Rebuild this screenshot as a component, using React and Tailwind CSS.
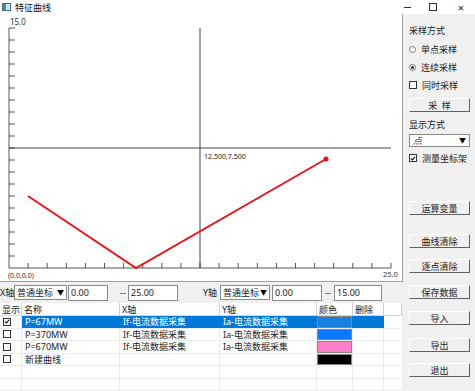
import React from 'react';

const font = { fontFamily: '"Noto Sans", "Noto Sans CJK SC", sans-serif' };

const Chart = () => {
  // axis: x 9..391, y 14..254 (svg coords)
  const xTicks = Array.from({ length: 20 }, (_, i) => 9 + (i + 1) * 19.1);
  const yTicks = Array.from({ length: 20 }, (_, i) => 14 + i * 12);
  return (
    <svg width="402" height="267" className="block">
      <line x1="9" y1="14" x2="9" y2="254" stroke="#555" strokeWidth="1" />
      <line x1="9" y1="254" x2="391" y2="254" stroke="#555" strokeWidth="1" />
      {yTicks.map((y) => (
        <line key={y} x1="9" y1={y} x2="15" y2={y} stroke="#555" strokeWidth="1" />
      ))}
      {xTicks.map((x) => (
        <line key={x} x1={x} y1="249" x2={x} y2="254" stroke="#555" strokeWidth="1" />
      ))}
      <text x="10" y="11" fontSize="8" fill="#333" style={font}>15.0</text>
      <text x="383" y="263" fontSize="7.5" fill="#333" style={font}>25.0</text>
      <text x="8" y="264" fontSize="7" fill="#333" style={font}>(0.0,0.0)</text>
      {/* crosshair */}
      <line x1="9" y1="134" x2="391" y2="134" stroke="#444" strokeWidth="1" />
      <line x1="200" y1="14" x2="200" y2="254" stroke="#444" strokeWidth="1" />
      <text x="204" y="145" fontSize="7" fill="#222" style={font}>12.500,7.500</text>
      {/* curve */}
      <polyline points="28,182 136,254 326,145" fill="none" stroke="#e8161b" strokeWidth="2" />
      <circle cx="326" cy="145" r="2.5" fill="#e8161b" />
    </svg>
  );
};

const Combo = ({ text, w }) => (
  <div className={`shrink-0 flex items-center justify-between h-[15px] border border-[#8a8a8a] bg-white px-[2px] ${w}`}>
    <span className="whitespace-nowrap text-[9px] leading-none text-[#222]">{text}</span>
    <span className="text-[7px] leading-none text-black">▼</span>
  </div>
);

const Field = ({ text, w }) => (
  <div className={`shrink-0 flex items-center h-[16px] border border-[#8a8a8a] bg-white px-[2px] ${w}`}>
    <span className="text-[9px] leading-none text-[#222]">{text}</span>
  </div>
);

const Btn = ({ children, className = '' }) => (
  <div className={`flex items-center justify-center h-[14px] w-[61px] bg-[#f0f0f0] border border-white border-r-[#606060] border-b-[#606060] text-[9px] leading-none text-[#222] ${className}`}>
    {children}
  </div>
);

const cols = 'grid grid-cols-[22px_98px_100px_97px_36px_31px_18px]';

const rows = [
  { show: true, name: 'P=67MW', x: 'If-电流数据采集', y: 'Ia-电流数据采集', color: 'bg-[#1a7fe0]', sel: true },
  { show: false, name: 'P=370MW', x: 'If-电流数据采集', y: 'Ia-电流数据采集', color: 'bg-[#0a78ff]' },
  { show: false, name: 'P=670MW', x: 'If-电流数据采集', y: 'Ia-电流数据采集', color: 'bg-[#ff80c8]' },
  { show: false, name: '新建曲线', x: '', y: '', color: 'bg-black' },
  null,
  null,
];

const Check = ({ on }) => (
  <div className="shrink-0 w-[8px] h-[8px] border border-[#333] bg-white flex items-center justify-center">
    {on && (
      <svg width="7" height="7" viewBox="0 0 7 7">
        <path d="M1 3.5 L2.8 5.2 L6 1.5" fill="none" stroke="#000" strokeWidth="1.2" />
      </svg>
    )}
  </div>
);

const Table = () => (
  <div className="bg-white h-[88px] w-[402px] overflow-hidden text-[9px] leading-none text-[#222]">
    <div className={`${cols} h-[13px] border-b border-[#d8d8d8]`}>
      {['显示', '名称', 'X轴', 'Y轴', '颜色', '删除', ''].map((h, i) => (
        <div key={i} className="whitespace-nowrap overflow-hidden flex items-center px-[2px] border-r border-[#cfcfcf]">{h}</div>
      ))}
    </div>
    {rows.map((r, i) => (
      <div key={i} className={`${cols} h-[12.5px] border-b border-[#ececec]`}>
        <div className="flex items-center pl-[3px] border-r border-[#ececec]">
          {r && <Check on={r.show} />}
        </div>
        {[r?.name, r?.x, r?.y].map((t, j) => (
          <div
            key={j}
            className={`whitespace-nowrap overflow-hidden flex items-center px-[3px] border-r ${r?.sel ? 'bg-[#0078d7] text-white border-[#0078d7]' : 'border-[#ececec]'}`}
          >
            {t || ''}
          </div>
        ))}
        <div className={`border-r ${r?.sel ? 'bg-[#0078d7] border-[#0078d7]' : 'border-[#ececec]'}`}>
          {r && <div className={`h-full w-full border border-[#888] ${r.color}`} />}
        </div>
        <div className={`border-r ${r?.sel ? 'bg-[#0078d7] border-[#0078d7]' : 'border-[#ececec]'}`} />
        <div />
      </div>
    ))}
  </div>
);

const Radio = ({ on, label }) => (
  <div className="flex items-center gap-[5px] h-[12px]">
    <div className="w-[7px] h-[7px] rounded-full border border-[#777] bg-white flex items-center justify-center">
      {on && <div className="w-[3px] h-[3px] rounded-full bg-[#222]" />}
    </div>
    <span className="text-[9px] leading-none text-[#222]">{label}</span>
  </div>
);

const SideCheck = ({ on, label }) => (
  <div className="flex items-center gap-[5px] h-[12px]">
    <Check on={on} />
    <span className="text-[9px] leading-none text-[#222]">{label}</span>
  </div>
);

export default function App() {
  return (
    <div className="w-[475px] h-[391px] bg-[#f0f0f0] overflow-hidden" style={font}>
      {/* title bar */}
      <div className="h-[14px] bg-white flex items-center">
        <div className="ml-[2px] w-[9px] h-[8px] border border-[#4a6a8a] bg-[#cfe3ee] flex items-start">
          <div className="w-[3px] h-full bg-[#3d9e7a]" />
        </div>
        <span className="ml-[4px] text-[9px] leading-none text-[#111]">特征曲线</span>
        <div className="ml-auto flex items-center h-full text-[#222]">
          <div className="w-[24px] flex justify-center">
            <div className="w-[7px] h-[1px] bg-[#333]" />
          </div>
          <div className="w-[28px] flex justify-center">
            <div className="w-[8px] h-[8px] border border-[#333]" />
          </div>
          <div className="w-[28px] flex justify-center text-[11px] leading-none">×</div>
        </div>
      </div>

      <div className="flex">
        {/* left */}
        <div className="w-[403px] shrink-0">
          <div className="h-[268px] bg-white border-r border-b border-[#a0a0a0]">
            <Chart />
          </div>
          <div className="h-[21px] flex items-center whitespace-nowrap text-[9px] leading-none text-[#222]">
            <span className="shrink-0 w-[14px]">X轴</span>
            <Combo text="普通坐标" w="w-[53px]" />
            <Field text="0.00" w="w-[40px] ml-[1px]" />
            <span className="shrink-0 ml-[12px] w-[8px]">--</span>
            <Field text="25.00" w="w-[50px]" />
            <span className="shrink-0 ml-[25px] w-[17px]">Y轴</span>
            <Combo text="普通坐标" w="w-[50px]" />
            <Field text="0.00" w="w-[50px] ml-[2px]" />
            <span className="shrink-0 ml-[3px] w-[9px]">--</span>
            <Field text="15.00" w="w-[48px]" />
          </div>
          <Table />
        </div>

        {/* right panel */}
        <div className="w-[72px] h-[377px] pl-[6px] pt-[12px] flex flex-col">
          <span className="text-[9px] leading-none text-[#222] h-[12px]">采样方式</span>
          <div className="mt-[5px] flex flex-col gap-[6px]">
            <Radio label="单点采样" />
            <Radio on label="连续采样" />
            <SideCheck label="同时采样" />
          </div>
          <Btn className="mt-[7px]">采&nbsp;&nbsp;样</Btn>
          <span className="mt-[8px] text-[9px] leading-none text-[#222] h-[12px]">显示方式</span>
          <div className="mt-[2px] flex items-center justify-between h-[13px] w-[61px] border border-[#8a8a8a] bg-white px-[3px]">
            <span className="text-[9px] leading-none italic text-[#333]">点</span>
            <span className="text-[7px] leading-none text-black">▼</span>
          </div>
          <div className="mt-[5px]">
            <SideCheck on label="测量坐标架" />
          </div>
          <Btn className="mt-[37px]">运算变量</Btn>
          <Btn className="mt-[19px]">曲线清除</Btn>
          <Btn className="mt-[11px]">逐点清除</Btn>
          <Btn className="mt-[12px]">保存数据</Btn>
          <Btn className="mt-[12px]">导入</Btn>
          <Btn className="mt-[13px]">导出</Btn>
          <Btn className="mt-[11px]">退出</Btn>
        </div>
      </div>
    </div>
  );
}
